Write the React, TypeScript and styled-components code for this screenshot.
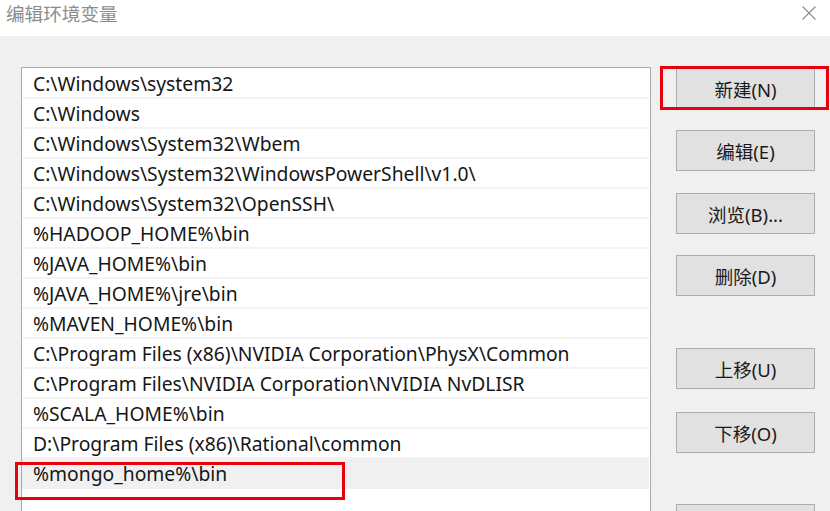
import React from "react";
import styled, { createGlobalStyle } from "styled-components";

const GlobalStyle = createGlobalStyle`
  html, body {
    margin: 0;
    padding: 0;
    background: #f0f0f0;
  }
  body {
    font-family: "Noto Sans", "Noto Sans CJK SC", sans-serif;
  }
`;

const Window = styled.div`
  width: 830px;
  height: 511px;
  overflow: hidden;
  display: flex;
  flex-direction: column;
  background: #f0f0f0;
`;

const TitleBar = styled.div`
  height: 36px;
  flex: none;
  background: #ffffff;
  display: flex;
  align-items: flex-start;
  justify-content: space-between;
  padding: 0 13px 0 6px;
  box-sizing: border-box;
`;

const Title = styled.div`
  font-family: "Noto Sans CJK SC", sans-serif;
  font-size: 18.6px;
  line-height: 25px;
  color: #8c8c8c;
`;

const CloseIcon = styled.svg`
  width: 16px;
  height: 16px;
  margin-top: 5px;
`;

const Body = styled.div`
  flex: 1;
  display: flex;
  align-items: flex-start;
  padding: 31px 0 0 21px;
  min-height: 0;
`;

const ListBox = styled.div`
  width: 630px;
  height: 520px;
  flex: none;
  box-sizing: border-box;
  background: #ffffff;
  border: 1px solid #a9a9a9;
  border-bottom: none;
  padding-top: 1px;
`;

const Row = styled.div<{ $selected?: boolean }>`
  position: relative;
  height: 30px;
  box-sizing: border-box;
  padding-left: 11px;
  display: flex;
  align-items: center;
  font-family: "Noto Sans", "Noto Sans CJK SC", sans-serif;
  font-size: 19.3px;
  color: #161616;
  white-space: nowrap;
  background: ${({ $selected }) => ($selected ? "#f0f0f0" : "#ffffff")};
  border-bottom: 2px solid ${({ $selected }) => ($selected ? "#f0f0f0" : "#f3f3f3")};
  margin-right: 1px;
`;

const RowMark = styled.span`
  position: absolute;
  z-index: 2;
  left: -7px;
  top: 3px;
  width: 330px;
  height: 38px;
  box-sizing: border-box;
  border: 3px solid #e8000d;
  pointer-events: none;
`;

const ButtonColumn = styled.div`
  display: flex;
  flex-direction: column;
  margin-left: 25px;
  padding-top: 1px;
`;

const ButtonSlot = styled.div<{ $gap: number; $marked?: boolean }>`
  position: relative;
  margin-bottom: ${({ $gap }) => $gap}px;

  &::after {
    content: "";
    display: ${({ $marked }) => ($marked ? "block" : "none")};
    position: absolute;
    left: -16px;
    right: -14px;
    top: -2px;
    bottom: -1px;
    border: 3px solid #e8000d;
    pointer-events: none;
  }
`;

const Button = styled.button`
  width: 139px;
  height: 41px;
  box-sizing: border-box;
  background: #e1e1e1;
  border: 1px solid #adadad;
  border-radius: 0;
  font-family: "Noto Sans", "Noto Sans CJK SC", sans-serif;
  font-size: 18.5px;
  color: #1a1a1a;
  padding: 0;
  display: flex;
  align-items: center;
  justify-content: center;
`;

const paths = [
  "C:\\Windows\\system32",
  "C:\\Windows",
  "C:\\Windows\\System32\\Wbem",
  "C:\\Windows\\System32\\WindowsPowerShell\\v1.0\\",
  "C:\\Windows\\System32\\OpenSSH\\",
  "%HADOOP_HOME%\\bin",
  "%JAVA_HOME%\\bin",
  "%JAVA_HOME%\\jre\\bin",
  "%MAVEN_HOME%\\bin",
  "C:\\Program Files (x86)\\NVIDIA Corporation\\PhysX\\Common",
  "C:\\Program Files\\NVIDIA Corporation\\NVIDIA NvDLISR",
  "%SCALA_HOME%\\bin",
  "D:\\Program Files (x86)\\Rational\\common",
  "%mongo_home%\\bin",
  "",
];

const buttons = [
  { label: "新建(N)", gap: 21, marked: true },
  { label: "编辑(E)", gap: 22 },
  { label: "浏览(B)...", gap: 21 },
  { label: "删除(D)", gap: 52 },
  { label: "上移(U)", gap: 23 },
  { label: "下移(O)", gap: 51 },
  { label: "", gap: 0 },
];

export default function App() {
  return (
    <>
      <GlobalStyle />
      <Window>
        <TitleBar>
          <Title>编辑环境变量</Title>
          <CloseIcon viewBox="0 0 16 16">
            <path d="M1.5 1.5 L14.5 14.5 M14.5 1.5 L1.5 14.5" stroke="#8a8a8a" strokeWidth="1.1" fill="none" />
          </CloseIcon>
        </TitleBar>
        <Body>
          <ListBox>
            {paths.map((p, i) => (
              <Row key={i} $selected={i === 13}>
                {p}
                {i === 13 && <RowMark />}
              </Row>
            ))}
          </ListBox>
          <ButtonColumn>
            {buttons.map((b, i) => (
              <ButtonSlot key={i} $gap={b.gap} $marked={b.marked}>
                <Button>{b.label}</Button>
              </ButtonSlot>
            ))}
          </ButtonColumn>
        </Body>
      </Window>
    </>
  );
}
